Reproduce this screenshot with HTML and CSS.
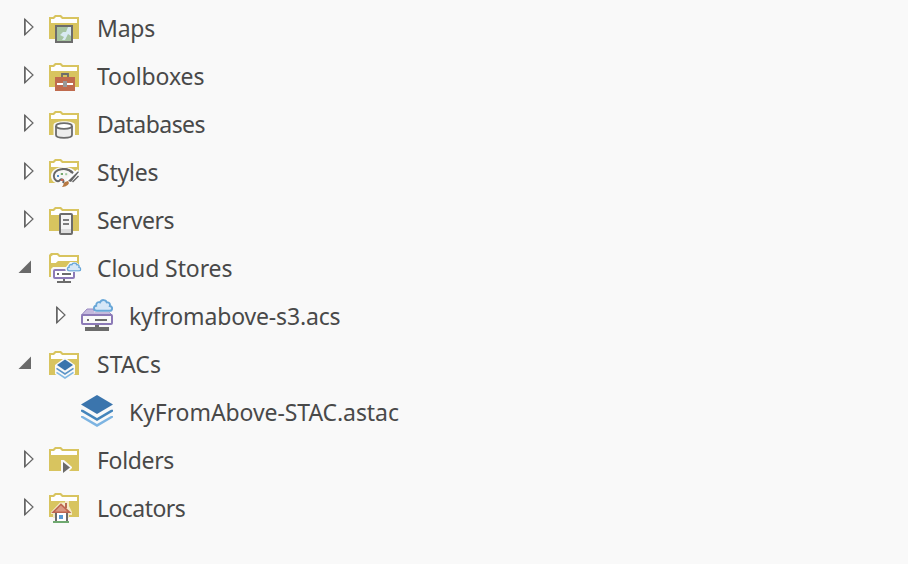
FILE: index.html
```
<!DOCTYPE html>
<html lang="en">
<head>
<meta charset="utf-8">
<title>Catalog</title>
<link rel="stylesheet" href="styles.css">
</head>
<body>
<svg class="defs" aria-hidden="true">
  <symbol id="closed" viewBox="0 0 20 48"><path d="M10.8 15.2V30.8L19 23Z" fill="#fff" stroke="#666" stroke-width="1.2"/><path d="M10.8 15V31" stroke="#666" stroke-width="1.6"/></symbol>
  <symbol id="open" viewBox="0 0 20 48"><path d="M4.5 29H17V16.5Z" fill="#6a6a6a"/></symbol>
  <symbol id="folder" viewBox="34 0 36 48"><path d="M35 13H39L41 11H47L49 13H65V35H35Z" fill="#d8c45f"/><path d="M37 15H40L42 13H46L48 15H63V19H37Z" fill="#fff"/></symbol>
  <symbol id="cloud" viewBox="0 0 20 13"><path d="M4 11.8C.2 11.8 0 7 3.2 6.8C3 3.5 5.5 2.6 7 3.4C8.5 0 13 .6 13.8 3.4C16.3 3 17.4 5 16.8 7C20 7.3 19.8 11.8 16.7 11.8Z" fill="#d6e7f7" stroke="#68a7d8" stroke-width="1.9"/></symbol>
</svg>
<ul class="tree">
  <li class="row"><svg class="toggle"><use href="#closed"/></svg>
    <svg class="icon" viewBox="34 0 36 48"><use href="#folder" x="34" width="36" height="48"/><path d="M41 21H59V39H41Z" fill="#6c6c6c"/><path d="M43 23H57V37H43Z" fill="#a6c4a1"/><path d="M57 23V32L54 30L51 36H48L50 33L46 31L49 28H52L54 23Z" fill="#d8eaf1"/></svg>
    <span class="label maps">Maps</span></li>
  <li class="row"><svg class="toggle"><use href="#closed"/></svg>
    <svg class="icon" viewBox="34 0 36 48"><use href="#folder" x="34" width="36" height="48"/><path d="M48 26V22H54V26" fill="none" stroke="#6c6c6c" stroke-width="1.8"/><path d="M41 25H61V39H41Z" fill="#c06b4e"/><path d="M43 31H59V33H43Z" fill="#fff"/><path d="M49 29H53V35H49Z" fill="#999"/></svg>
    <span class="label toolboxes">Toolboxes</span></li>
  <li class="row"><svg class="toggle"><use href="#closed"/></svg>
    <svg class="icon" viewBox="34 0 36 48"><path d="M35 13H39L41 11H47L49 13H65V35H35Z" fill="#d8c45f"/><path d="M37 15H40L42 13H46L48 15H63V19H37Z" fill="#fff"/><path d="M39.5 36V25C39.5 20 61 20 61 25V36Z" fill="#f9f9f9"/><path d="M42 26V35C42 38.8 58 38.8 58 35V26" fill="#ededed" stroke="#6c6c6c" stroke-width="1.8"/><ellipse cx="50" cy="26" rx="8" ry="2.9" fill="#fff" stroke="#6c6c6c" stroke-width="1.7"/></svg>
    <span class="label databases">Databases</span></li>
  <li class="row"><svg class="toggle"><use href="#closed"/></svg>
    <svg class="icon" viewBox="34 0 36 48"><use href="#folder" x="34" width="36" height="48"/><path d="M37 28C37 17 56 17 61 23L65 23V35H59L52 37L47 36C41 36 37 33 37 28Z" fill="#f9f9f9"/><path d="M58 25C53 18 40 21 39.8 28C39.8 32 44 35 46 32C48 30 50.5 32 49 35" fill="#f6f6f6" stroke="#666" stroke-width="1.9"/><path d="M48 20.8C55 20.8 60.5 23.8 59 28" fill="none" stroke="#666" stroke-width="1.7"/><path d="M43 27H45V29H43Z" fill="#4d91ce"/><path d="M46.8 25H49V27H46.8Z" fill="#75a96f"/><path d="M51.2 25.2H53.2V27.2H51.2Z" fill="#a0c8a0"/><path d="M47 31H49.5V33H47Z" fill="#cc6450"/><path d="M54 33.5L65 23" stroke="#fff" stroke-width="5"/><path d="M54 33L64 23.2L65 24L57 34Z" fill="#666"/><path d="M58.5 34L64.5 28" fill="none" stroke="#666" stroke-width="1.4"/><path d="M51 34L54 33L55 35C54 38 50 39 48 39C50 37 49 35 51 34Z" fill="#b77942"/></svg>
    <span class="label styles">Styles</span></li>
  <li class="row"><svg class="toggle"><use href="#closed"/></svg>
    <svg class="icon" viewBox="34 0 36 48"><use href="#folder" x="34" width="36" height="48"/><rect x="46" y="18" width="12" height="20" rx="1" fill="#f5f5f5" stroke="#6c6c6c" stroke-width="2"/><path d="M49 24H55M49 28H55" stroke="#555" stroke-width="1.6"/><path d="M47 33H57V37H47Z" fill="#ddd"/></svg>
    <span class="label servers">Servers</span></li>
  <li class="row"><svg class="toggle"><use href="#open"/></svg>
    <svg class="icon" viewBox="34 0 36 48"><path d="M35 11L37 9H44L46 11H65V33H35Z" fill="#d8c45f"/><path d="M37 12.5L39 11H43L45 13H63V17H44L42 19H37Z" fill="#fff"/><path d="M44 17.5H58L53 23H37V19H42Z" fill="#d8c45f"/><path d="M37 25L39 23H52L56 18H62L68 23V34L62 37H37Z" fill="#f9f9f9"/><rect x="40" y="26" width="20" height="8" rx="1" fill="#fff" stroke="#8c7ab7" stroke-width="2"/><path d="M43 29H45V31H43ZM48 29H57V31H48ZM49 35H51V37H57V39H43V37H49Z" fill="#6c6c6c"/><path d="M51 24H68V28H52Z" fill="#f9f9f9"/><use href="#cloud" x="52.5" y="18.2" width="15" height="9.6"/></svg>
    <span class="label cloud-stores">Cloud Stores</span></li>
  <li class="row child"><svg class="toggle"><use href="#closed"/></svg>
    <svg class="icon" viewBox="34 0 36 48"><path d="M35.5 23L41 17H47L49 20H63L66 23Z" fill="#c5b9dd" stroke="#9989c2" stroke-width="1"/><path d="M48 19.3H65V20.3H48Z" fill="#f9f9f9"/><rect x="36" y="23" width="30" height="9" rx="1" fill="#f9f9f9" stroke="#8c7ab7" stroke-width="2"/><path d="M41 27H43V29H41ZM49 27H61V29H49ZM49 33H53V35H63V39H39V35H49Z" fill="#6c6c6c"/><use href="#cloud" x="47" y="7" width="20" height="13"/></svg>
    <span class="label acs">kyfromabove-s3.acs</span></li>
  <li class="row"><svg class="toggle"><use href="#open"/></svg>
    <svg class="icon" viewBox="34 0 36 48"><use href="#folder" x="34" width="36" height="48"/><path d="M41 25L51 17.5L61 25V34L51 41L41 34Z" fill="#f9f9f9"/><path d="M43 25L51 19.5L59 25L51 30.5Z" fill="#3b75ad"/><path d="M42.5 28.3L51 34L59.5 28.3" fill="none" stroke="#5b94c7" stroke-width="1.6"/><path d="M42.5 32.3L51 38L59.5 32.3" fill="none" stroke="#83b9e3" stroke-width="1.6"/></svg>
    <span class="label stacs">STACs</span></li>
  <li class="row child"><span class="toggle"></span>
    <svg class="icon" viewBox="34 0 36 48"><path d="M35 16.5L51 7L67 16.5L51 26Z" fill="#3b75ad"/><path d="M35 21.7L37 21.7L51 30L65 21.7L67 21.7V23.5L51 33L35 23.5Z" fill="#4485bc"/><path d="M35 28L37 28L51 36L65 28L67 28V29.5L51 39L35 29.5Z" fill="#7db4e2"/></svg>
    <span class="label astac">KyFromAbove-STAC.astac</span></li>
  <li class="row"><svg class="toggle"><use href="#closed"/></svg>
    <svg class="icon" viewBox="34 0 36 48"><use href="#folder" x="34" width="36" height="48"/><path d="M47 24H50L58 31V32L55 35H47Z" fill="#f9f9f9"/><path d="M49 26V37L56 31.5Z" fill="#6a6a6a"/></svg>
    <span class="label folders">Folders</span></li>
  <li class="row"><svg class="toggle"><use href="#closed"/></svg>
    <svg class="icon" viewBox="34 0 36 48"><use href="#folder" x="34" y="-2" width="36" height="48"/><path d="M37 28L46 18.5L51 18.5V17H55V22L58 28V31H55V34H39V30H37Z" fill="#f4ebc8"/><path d="M42 29H52V37H42Z" fill="#fff"/><path d="M51 19H53V24H51Z" fill="#b86a54"/><path d="M39 28.3L47 20.3L55.5 28.3Z" fill="#d99882" stroke="#bd6650" stroke-width="1.6"/><path d="M42 29V37M53 29V37" stroke="#6c6c6c" stroke-width="2"/><path d="M45 31H49V35H45Z" fill="#589bd4"/><path d="M39 37H55V39H39Z" fill="#6fa970"/></svg>
    <span class="label locators">Locators</span></li>
</ul>
</body>
</html>
```
FILE: styles.css
```
body { margin: 0; background: #f9f9f9; color: #494949; font-family: "Noto Sans", sans-serif; font-size: 23px; }
.defs { position: absolute; width: 0; height: 0; }
.tree { list-style: none; margin: 0; padding: 4px 0 0; }
.row { display: flex; align-items: center; height: 48px; padding-left: 14px; }
.child { padding-left: 46px; }
.toggle { flex: none; width: 20px; height: 48px; margin-right: 14px; }
.icon { flex: none; width: 36px; height: 48px; margin-right: 13px; }
.label { line-height: 48px; white-space: nowrap; letter-spacing: -0.2px; }
.toolboxes, .cloud-stores { letter-spacing: -0.1px; }
.databases, .locators { letter-spacing: -0.55px; }
.servers { letter-spacing: -0.45px; }
.folders { letter-spacing: -0.35px; }
.stacs { letter-spacing: 0.1px; }
.astac { letter-spacing: -0.08px; }
.acs { letter-spacing: -0.16px; }
```
